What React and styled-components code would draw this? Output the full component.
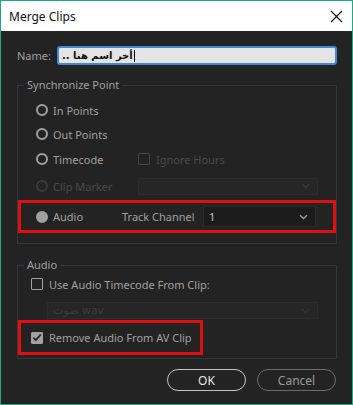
import styled, { createGlobalStyle } from "styled-components";

const GlobalStyle = createGlobalStyle`
    html, body {
        margin: 0;
        padding: 0;
        background: #ffffff;
    }
    * {
        box-sizing: border-box;
    }
`

const Radio = ({ filled, disabled }) => (
    <RadioDot $filled={filled} $disabled={disabled} />
)

const Chevron = ({ color }) => (
    <svg width="9" height="6" viewBox="0 0 9 6">
        <path d="M1 1.2 L4.5 4.6 L8 1.2" fill="none" stroke={color} strokeWidth="1.4" />
    </svg>
)

const App = () =>
{
    return (
        <>
            <GlobalStyle />
            <Window>
                <TitleBar>
                    <Title>Merge Clips</Title>
                    <svg width="13" height="13" viewBox="0 0 13 13">
                        <path d="M1 1 L12 12 M12 1 L1 12" stroke="#111" strokeWidth="1.1" />
                    </svg>
                </TitleBar>
                <Body>
                    <NameRow>
                        <Label>Name:</Label>
                        <NameInput>
                            <ArabicText dir="rtl">أخر اسم هنا ..</ArabicText>
                            <Caret />
                        </NameInput>
                    </NameRow>

                    <Group>
                        <Legend>Synchronize Point</Legend>
                        <Row $first>
                            <Radio />
                            <Label>In Points</Label>
                        </Row>
                        <Row>
                            <Radio />
                            <Label>Out Points</Label>
                        </Row>
                        <Row $height="26px">
                            <Radio />
                            <Label $width="85px">Timecode</Label>
                            <Check $disabled />
                            <Label $disabled>Ignore Hours</Label>
                        </Row>
                        <Row $height="28px">
                            <Radio disabled />
                            <Label $disabled $width="85px">Clip Marker</Label>
                            <Select $disabled $width="180px">
                                <span />
                                <Chevron color="#3a3a3a" />
                            </Select>
                        </Row>
                        <Highlight $width="auto">
                            <Radio filled />
                            <Label $width="69px">Audio</Label>
                            <Label $width="81px">Track Channel</Label>
                            <Select $width="113px" $height="21px">
                                <SelectValue>1</SelectValue>
                                <Chevron color="#9a9a9a" />
                            </Select>
                        </Highlight>
                    </Group>

                    <Group $spaced>
                        <Legend>Audio</Legend>
                        <CheckRow>
                            <Check />
                            <Label>Use Audio Timecode From Clip:</Label>
                        </CheckRow>
                        <IndentRow>
                            <Select $disabled $width="271px">
                                <DisabledValue>صوت wav</DisabledValue>
                                <Chevron color="#333" />
                            </Select>
                        </IndentRow>
                        <Highlight $width="185px" $check>
                            <Check $checked>
                                <svg width="10" height="9" viewBox="0 0 10 9">
                                    <path d="M1.3 4.6 L3.9 7.2 L8.8 1.4" fill="none" stroke="#2a2a2a" strokeWidth="1.8" />
                                </svg>
                            </Check>
                            <Label>Remove Audio From AV Clip</Label>
                        </Highlight>
                    </Group>

                    <Buttons>
                        <Button $primary>OK</Button>
                        <Button>Cancel</Button>
                    </Buttons>
                </Body>
            </Window>
        </>
    )
}

const Window = styled.div`
    width: 353px;
    height: 405px;
    border: 1px solid #1fa78b;
    display: flex;
    flex-direction: column;
    font-family: "Noto Sans", "Open Sans", sans-serif;
    font-size: 11px;
    background-color: #232323;
`

const TitleBar = styled.div`
    height: 30px;
    background-color: #ffffff;
    display: flex;
    align-items: center;
    justify-content: space-between;
    padding: 0 9px 0 8px;
`

const Title = styled.span`
    font-size: 12px;
    color: #111;
`

const Body = styled.div`
    flex: 1;
    display: flex;
    flex-direction: column;
    padding: 15px 15px 0 16px;
`

const NameRow = styled.div`
    display: flex;
    align-items: center;
    gap: 6px;
    height: 19px;
`

const Label = styled.span`
    color: ${props => props.$disabled ? "#4a4a4a" : "#a0a0a0"};
    width: ${props => props.$width || "auto"};
    flex-shrink: 0;
    white-space: nowrap;
`

const NameInput = styled.div`
    flex: 1;
    height: 19px;
    background-color: #e4e4e4;
    border: 2px solid #3f8ad8;
    border-radius: 3px;
    display: flex;
    align-items: center;
    padding-left: 3px;
`

const ArabicText = styled.span`
    color: #111;
    font-size: 10px;
    font-weight: bold;
    font-family: "DejaVu Sans", sans-serif;
`

const Caret = styled.span`
    width: 1px;
    height: 12px;
    background-color: #000;
    margin-left: 1px;
`

const Group = styled.fieldset`
    margin: ${props => props.$spaced ? "14px" : "13px"} 0 0 0;
    padding: 0 0 2px 0;
    border: 1px solid #363636;
    display: flex;
    flex-direction: column;
`

const Legend = styled.legend`
    color: #a0a0a0;
    padding: 0 3px;
    margin-left: 6px;
    line-height: 14px;
`

const Row = styled.div`
    display: flex;
    align-items: center;
    height: ${props => props.$height || "24px"};
    padding-left: 18px;
    margin-top: ${props => props.$first ? "6px" : "0"};
`

const RadioDot = styled.span`
    width: 12px;
    height: 12px;
    border-radius: 50%;
    flex-shrink: 0;
    margin-right: 5px;
    border: 2px solid ${props => props.$disabled ? "#3a3a3a" : "#a0a0a0"};
    background-color: ${props => props.$filled ? "#a0a0a0" : "transparent"};
`

const Check = styled.span`
    width: 12px;
    height: 12px;
    flex-shrink: 0;
    margin-right: 6px;
    border: 1.5px solid ${props => props.$disabled ? "#444" : "#a0a0a0"};
    background-color: ${props => props.$checked ? "#a3a3a3" : "transparent"};
    border-radius: 1px;
    display: flex;
    align-items: center;
    justify-content: center;
`

const Select = styled.div`
    width: ${props => props.$width};
    height: ${props => props.$height || "17px"};
    background-color: ${props => props.$disabled ? "#262626" : "#1c1c1c"};
    border: 1px solid ${props => props.$disabled ? "#2c2c2c" : "#2a2a2a"};
    display: flex;
    align-items: center;
    justify-content: space-between;
    padding: 0 7px 0 5px;
`

const SelectValue = styled.span`
    color: #c8c8c8;
`

const DisabledValue = styled.span`
    color: #3c3c3c;
    font-family: "DejaVu Sans", sans-serif;
    font-size: 11px;
`

const Highlight = styled.div`
    display: flex;
    align-items: center;
    width: ${props => props.$width};
    height: ${props => props.$check ? "35px" : "33px"};
    margin-top: ${props => props.$check ? "1px" : "0"};
    margin-bottom: ${props => props.$check ? "1px" : "8px"};
    border: 3px solid #e01010;
    padding-left: ${props => props.$check ? "10px" : "15px"};
`

const CheckRow = styled.div`
    display: flex;
    align-items: center;
    height: 24px;
    padding-left: 13px;
`

const IndentRow = styled.div`
    display: flex;
    padding-left: 29px;
    margin-top: 6px;
`

const Buttons = styled.div`
    display: flex;
    justify-content: flex-end;
    gap: 11px;
    margin-top: 10px;
    padding-right: 1px;
`

const Button = styled.div`
    width: 79px;
    height: 22px;
    border-radius: 11px;
    border: 1.5px solid ${props => props.$primary ? "#c4c4c4" : "#6c6c6c"};
    color: ${props => props.$primary ? "#e8e8e8" : "#9a9a9a"};
    display: flex;
    align-items: center;
    justify-content: center;
    font-size: 12px;
`

export default App;
